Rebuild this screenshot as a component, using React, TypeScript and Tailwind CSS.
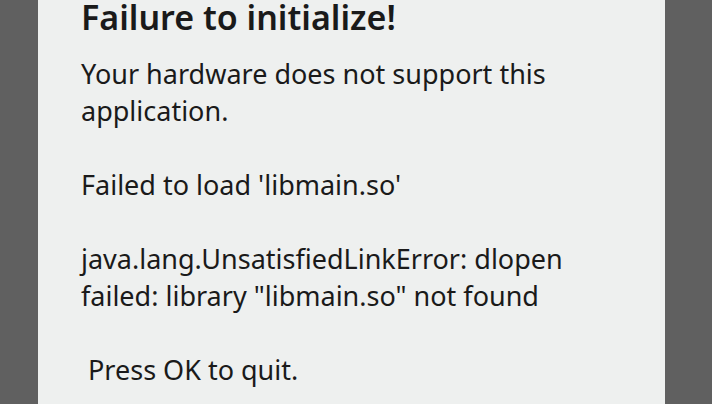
import React from 'react';

const lines: (string | null)[] = [
  'Your hardware does not support this',
  'application.',
  null,
  "Failed to load 'libmain.so'",
  null,
  'java.lang.UnsatisfiedLinkError: dlopen',
  'failed: library "libmain.so" not found',
  null,
  ' Press OK to quit.',
];

export default function App() {
  return (
    <div className="w-[720px] h-[404px] overflow-hidden flex bg-white font-['Noto_Sans',sans-serif]">
      <div className="w-[38px] bg-[#606060]" />
      {/* dialog body */}
      <div className="w-[627px] bg-[#eef0ef] pl-[43px] text-[#1a1a1a]">
        <h1 className="text-[34px] font-semibold leading-[38px] -mt-[2px]">Failure to initialize!</h1>
        <div className="mt-[19px] text-[27px] leading-[37px] whitespace-pre">
          {lines.map((l, i) => (
            <div key={i} className="h-[37px]">{l ?? ''}</div>
          ))}
        </div>
      </div>
      <div className="w-[47px] bg-[#606060]" />
      <div className="flex-1 bg-white" />
    </div>
  );
}
